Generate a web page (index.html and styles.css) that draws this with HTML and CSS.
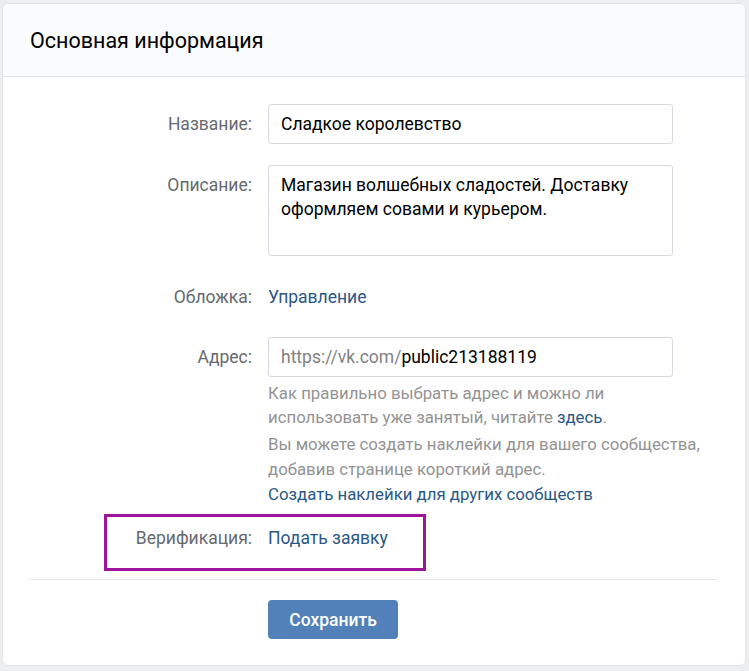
FILE: index.html
```html
<!DOCTYPE html>
<html lang="ru">
<head>
<meta charset="utf-8">
<title>Основная информация</title>
<link rel="stylesheet" href="styles.css">
</head>
<body>
<div class="card">
  <div class="card-header">Основная информация</div>
  <div class="card-body">
    <div class="row">
      <div class="label">Название:</div>
      <div class="field"><div class="input">Сладкое королевство</div></div>
    </div>
    <div class="row">
      <div class="label">Описание:</div>
      <div class="field"><div class="input textarea">Магазин волшебных сладостей. Доставку оформляем совами и курьером.</div></div>
    </div>
    <div class="row row-plain">
      <div class="label">Обложка:</div>
      <div class="field"><a class="link">Управление</a></div>
    </div>
    <div class="row row-address">
      <div class="label">Адрес:</div>
      <div class="field">
        <div class="input"><span class="prefix">https://vk.com/</span>public213188119</div>
        <p class="hint hint-first">Как правильно выбрать адрес и можно ли<br>использовать уже занятый, читайте <a class="link">здесь</a>.</p>
        <p class="hint">Вы можете создать наклейки для вашего сообщества,<br>добавив странице короткий адрес.<br><a class="link">Создать наклейки для других сообществ</a></p>
      </div>
    </div>
    <div class="row row-plain row-verify">
      <div class="highlight"></div>
      <div class="label">Верификация:</div>
      <div class="field"><a class="link">Подать заявку</a></div>
    </div>
    <div class="divider"></div>
    <div class="actions">
      <button class="btn">Сохранить</button>
    </div>
  </div>
</div>
</body>
</html>
```

FILE: styles.css
```css
html, body {
  margin: 0;
  padding: 0;
}
body {
  background: #edeef0;
  font-family: Roboto, "Noto Sans", "Liberation Sans", sans-serif;
  font-size: 17.5px;
  color: #000;
  padding: 3px 3px 6px 2px;
}
.card {
  background: #fff;
  border: 1px solid #e1e3e6;
  border-radius: 6px;
  overflow: hidden;
}
.card-header {
  background: #fafbfc;
  border-bottom: 1px solid #e3e4e8;
  height: 72px;
  display: flex;
  align-items: center;
  padding-left: 27px;
  font-size: 21.5px;
  color: #000;
}
.card-body {
  padding: 27px 0 26px;
  display: flex;
  flex-direction: column;
}
.row {
  display: grid;
  grid-template-columns: 249px 1fr;
  column-gap: 16px;
  margin-bottom: 21px;
  position: relative;
}
.label {
  text-align: right;
  color: #656a70;
  line-height: 40px;
}
.row-plain {
  margin-bottom: 20px;
}
.row-plain .label,
.row-plain .field {
  line-height: 40px;
}
.field {
  min-width: 0;
}
.input {
  box-sizing: border-box;
  width: 405px;
  height: 40px;
  border: 1px solid #d3d9de;
  border-radius: 3px;
  padding: 0 12px;
  line-height: 38px;
  color: #000;
  white-space: nowrap;
}
.textarea {
  height: 91px;
  line-height: 24px;
  padding: 7px 12px;
  white-space: normal;
}
.prefix {
  color: #828282;
}
.link {
  color: #2a5885;
  text-decoration: none;
}
.hint {
  margin: 3px 0 0;
  color: #939393;
  font-size: 16.8px;
  line-height: 25px;
  white-space: nowrap;
}
.hint-first {
  margin-top: 4px;
  line-height: 24px;
}
.row-address {
  margin-bottom: 11px;
}
.row-verify {
  margin-bottom: 21px;
}
.highlight {
  position: absolute;
  left: 101px;
  top: -4px;
  width: 316px;
  height: 51px;
  border: 3px solid #a0139c;
}
.divider {
  height: 1px;
  background: #e7e8ec;
  margin: 0 28px 0 27px;
}
.actions {
  padding-left: 265px;
  padding-top: 20px;
}
.btn {
  background: #5181b8;
  color: #fff;
  border: 0;
  border-radius: 4px;
  width: 130px;
  height: 39px;
  font-family: Roboto, "Noto Sans", "Liberation Sans", sans-serif;
  font-size: 17.5px;
  font-weight: 500;
  padding: 0;
}
```
